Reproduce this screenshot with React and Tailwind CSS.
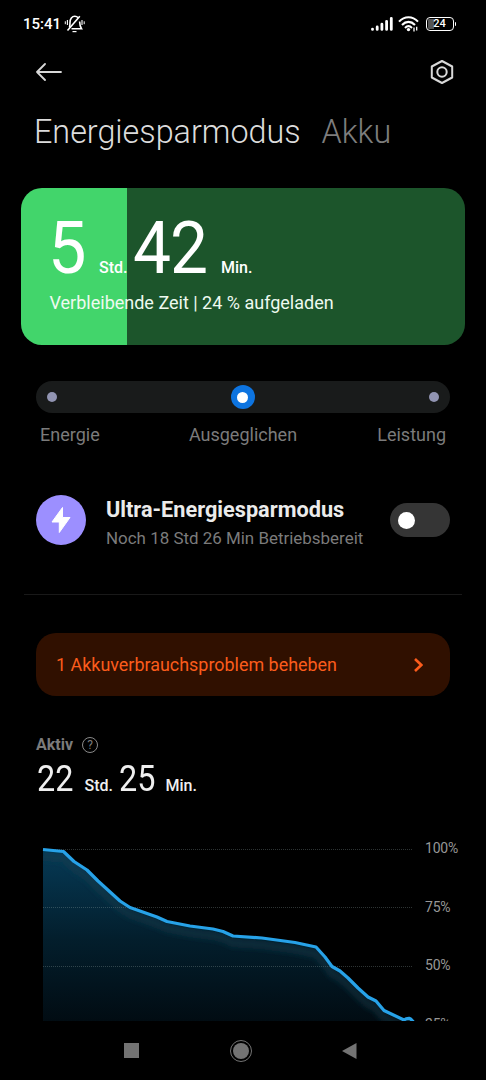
import React, { useState } from "react";

// Niveles de batería: [x, y] dentro del gráfico
const points = [
  [43, 19.5], [63.5, 21.5], [74, 31.5], [87, 40], [98, 51], [120, 71], [130, 77.5],
  [157, 87], [167, 91.5], [190, 96], [213, 99], [223, 101.5], [233, 106], [262, 108],
  [295, 112.5], [316, 117], [325, 127], [332, 136.5], [340, 141], [348, 148],
  [358, 158], [368, 167], [376, 171], [384, 180.5], [404, 190], [406, 188.8], [409, 188.3], [411, 189.3], [413.5, 192],
];

const modes = ["Energie", "Ausgeglichen", "Leistung"];

const StatusBar = () => (
  <div className="flex h-12 shrink-0 items-center justify-between pl-[23px] pr-[30px] text-white">
    <div className="flex items-center">
      <span className="text-[15px] leading-5 font-medium">15:41</span>
      {/* Campana silenciada */}
      <svg className="ml-[3px]" width="22" height="20" viewBox="0 0 22 20" fill="none" stroke="currentColor" strokeWidth="1.6">
        <path d="M5.5 13.5C6 11.5 6 10 6 8.5C6 5 8 2.3 10.8 2.3C12.3 2.3 13.3 2.8 14.2 3.8" />
        <path d="M15.6 7.5C15.7 10.5 16 12.5 17.5 14.7H7.5" />
        <path d="M3.5 16.5L15.8 2.2" />
        <path d="M8.5 17.6H12.5" strokeWidth="1.2" />
        <path d="M3.4 6V11M18 6V11" strokeWidth="1.1" />
        <path d="M1.3 7.3V10.2M20.2 7.3V10.2" strokeWidth="1" />
      </svg>
    </div>
    <div className="flex items-center">
      <svg width="22" height="16" viewBox="0 0 22 16" stroke="currentColor" strokeWidth="2.8" strokeLinecap="round">
        <path d="M1.5 13.4V13.1M6.2 13.4V11M10.9 13.4V8.2M15.6 13.4V5.3M20.3 13.4V2.3" />
      </svg>
      <svg className="ml-[5px]" width="22" height="18" viewBox="0 0 22 18" fill="none" stroke="currentColor" strokeWidth="2.1">
        <path d="M1 6.6C6.5 0.8 14.5 0.8 20 6.6" />
        <path d="M4 9.9C8 5.8 13 5.8 17 9.9" />
        <path d="M7 12.9C9.3 10.6 11.7 10.6 14 12.9" />
        <circle cx="10.5" cy="14.6" r="1.7" fill="currentColor" stroke="none" />
        <path d="M16 12.6V16.4M18.7 11.8V15.6" strokeWidth="1.3" />
      </svg>
      <div className="ml-1.5 flex h-[14px] w-[28px] rounded-[4px] border-[1.5px] border-white p-px">
        <div className="flex flex-1 items-center justify-center rounded-[1px] bg-[linear-gradient(90deg,#555_0_27%,transparent_27%)]">
          <span className="text-[11px] leading-[10px] font-medium">24</span>
        </div>
      </div>
      <div className="ml-px h-1 w-[1.5px] rounded-r bg-white" />
    </div>
  </div>
);

const ModeSlider = ({ mode, setMode }) => (
  <div className="mx-9 mt-9 shrink-0">
    <div className="flex h-8 items-center justify-between rounded-full bg-[#191b1b] pl-[10.5px] pr-[11px]">
      {modes.map((m, i) => (
        <button key={m} onClick={() => setMode(i)} className="flex h-6 items-center justify-center">
          {mode === i ? (
            <span className="flex size-6 items-center justify-center rounded-full bg-[#0d74e0]">
              <span className="size-[11px] rounded-full bg-white" />
            </span>
          ) : (
            <span className="size-[10px] rounded-full bg-[#9194b2]" />
          )}
        </button>
      ))}
    </div>
    <div className="mt-[10px] grid grid-cols-3 px-1 text-[18px] leading-6 text-[#7b7b7b]">
      {modes.map((m) => (
        <span key={m} className="text-center first:text-left last:text-right">{m}</span>
      ))}
    </div>
  </div>
);

const Chart = () => {
  const line = points.map((p) => p.join(",")).join(" ");
  return (
    <div className="mt-[31px] flex h-[191px] shrink-0 overflow-hidden">
      <svg className="shrink-0" width="416" height="191" viewBox="0 0 416 191" fill="none">
        <defs>
          <linearGradient id="area" x1="0" y1="19" x2="0" y2="200" gradientUnits="userSpaceOnUse">
            <stop offset="0" stopColor="#063a56" />
            <stop offset="0.5" stopColor="#031e2c" />
            <stop offset="1" stopColor="#010a10" />
          </linearGradient>
          <clipPath id="under">
            <polygon points={`43,195 ${line} 414,195`} />
          </clipPath>
          <filter id="soft" x="-5%" y="-10%" width="110%" height="120%">
            <feGaussianBlur stdDeviation="2.5" />
          </filter>
        </defs>
        <polygon points={`43,195 ${line} 414,195`} fill="url(#area)" />
        <g clipPath="url(#under)">
          <polyline points={line} transform="translate(0 7)" stroke="#124050" strokeOpacity="0.4" strokeWidth="9" filter="url(#soft)" />
        </g>
        <path d="M43 19.5H412M43 77.5H412M43 136.5H412" stroke="#8fa3a3" strokeOpacity="0.32" strokeDasharray="1 1" />
        <polyline points={line} stroke="#27a2e8" strokeWidth="3.2" strokeLinejoin="round" />
      </svg>
      <div className="ml-[9px] mt-2 flex flex-col text-[14px] leading-5 tracking-[-0.2px] text-[#979797]">
        <span className="h-[58.5px] shrink-0">100%</span>
        <span className="h-[58.5px] shrink-0">75%</span>
        <span className="h-[58.5px] shrink-0">50%</span>
        <span className="shrink-0">25%</span>
      </div>
    </div>
  );
};

const App = () => {
  const [mode, setMode] = useState(1);
  const [ultra, setUltra] = useState(false);

  return (
    <div className="flex h-[1080px] w-[486px] flex-col overflow-hidden bg-black font-[Roboto,sans-serif]">
      <StatusBar />

      {/* Cabecera */}
      <div className="flex h-[50px] shrink-0 items-center justify-between pl-9 pr-8 pb-[2px] text-[#d8d8d8]">
        <svg width="26" height="18" viewBox="0 0 26 18" fill="none" stroke="currentColor" strokeWidth="1.8" strokeLinecap="round" strokeLinejoin="round">
          <path d="M25 9H1M9 1L1 9L9 17" />
        </svg>
        <svg width="24" height="26" viewBox="0 0 24 26" fill="none" stroke="currentColor" strokeWidth="2" strokeLinejoin="round">
          <path d="M12 2L22.2 7.5V18.5L12 24L1.8 18.5V7.5Z" />
          <circle cx="12" cy="13" r="4.7" />
        </svg>
      </div>
      <div className="flex h-[71px] shrink-0 items-center pb-[2px] pl-[34px] text-[32.3px] font-light">
        <span className="text-[#dcdcdc]">Energiesparmodus</span>
        <span className="ml-[21px] text-[#7d7d7d]">Akku</span>
      </div>

      {/* Tiempo restante */}
      <div className="mx-[21px] mt-[18.5px] h-[157.5px] shrink-0 rounded-[21px] bg-[linear-gradient(90deg,#42d56b_0_106.5px,#1c552b_106.5px)] px-7 pt-[25px] text-white">
        <div className="flex h-[72px] items-baseline leading-[72px]">
          <span className="-ml-[1.5px] w-[51.5px] origin-left scale-x-95 text-[72px]">5</span>
          <span className="w-[34px] text-[16px] font-medium">Std.</span>
          <span className="w-[88px] origin-left scale-x-94 text-[72px] tracking-[-1px]">42</span>
          <span className="text-[16px] font-medium">Min.</span>
        </div>
        <p className="mt-[6.5px] pl-[0.5px] text-[18px] leading-6 text-[#eefaf0]">Verbleibende Zeit | 24 % aufgeladen</p>
      </div>

      <ModeSlider mode={mode} setMode={setMode} />

      <div className="mx-9 mt-12 flex h-[50px] shrink-0 items-center">
        <div className="flex size-[50px] items-center justify-center rounded-full bg-[#9c8fff]">
          <svg width="20" height="28" viewBox="0 0 20 28" fill="#fff" stroke="#fff" strokeWidth="1" strokeLinejoin="round">
            <path d="M11.5 1.5L1 16H8.3V26.5L19 11.5H11.5Z" />
          </svg>
        </div>
        <div className="ml-5 flex-1 pt-2">
          <h2 className="text-[21.7px] leading-7 font-bold text-[#ebebeb]">Ultra-Energiesparmodus</h2>
          <p className="text-[16.95px] leading-7 text-[#7b7b7b]">Noch 18 Std 26 Min Betriebsbereit</p>
        </div>
        <button
          onClick={() => setUltra(!ultra)}
          className={ultra ? "flex h-[34px] w-[60px] items-center justify-end rounded-full bg-[#0d74e0] px-2" : "flex h-[34px] w-[60px] items-center rounded-full bg-[#353535] px-2"}
        >
          <span className="size-[17px] rounded-full bg-white" />
        </button>
      </div>

      <div className="mx-6 mt-[49px] h-px shrink-0 bg-[#191919]" />

      <button className="mx-9 mt-[38px] flex h-[63px] shrink-0 items-center justify-between rounded-[20px] bg-[#301000] pl-5 pr-[27px] text-[#fb5c1c]">
        <span className="pt-[2px] text-[17.93px]">1 Akkuverbrauchsproblem beheben</span>
        <svg width="9" height="14" viewBox="0 0 9 14" fill="none" stroke="currentColor" strokeWidth="2.6">
          <path d="M1 1L7.3 7L1 13" />
        </svg>
      </button>

      {/* Tiempo activo */}
      <div className="mt-[39px] flex h-5 shrink-0 items-center pl-9 text-[#7b7b7b]">
        <span className="text-[16px] font-bold">Aktiv</span>
        <span className="ml-[9px] flex size-4 items-center justify-center rounded-full border border-[#8a8a8a] text-[12px] leading-none">?</span>
      </div>
      <div className="mt-1 flex h-10 shrink-0 items-baseline pl-[36.5px] leading-10 text-[#efefef]">
        <span className="w-[48px] origin-left scale-x-90 text-[36px]">22</span>
        <span className="w-[34px] text-[16px] font-medium">Std.</span>
        <span className="w-[47px] origin-left scale-x-90 text-[36px]">25</span>
        <span className="text-[16px] font-medium">Min.</span>
      </div>

      <Chart />

      {/* Barra de navegación */}
      <div className="flex h-[59px] shrink-0 items-center justify-between pl-[124px] pr-[129px]">
        <div className="size-[15px] bg-[#737373]" />
        <div className="flex size-[22px] items-center justify-center rounded-full border-[1.5px] border-[#737373]">
          <div className="size-4 rounded-full bg-[#737373]" />
        </div>
        <svg width="15" height="16" viewBox="0 0 15 16" fill="#737373">
          <path d="M0 8L14.5 0V16Z" />
        </svg>
      </div>
    </div>
  );
};

export default App;
